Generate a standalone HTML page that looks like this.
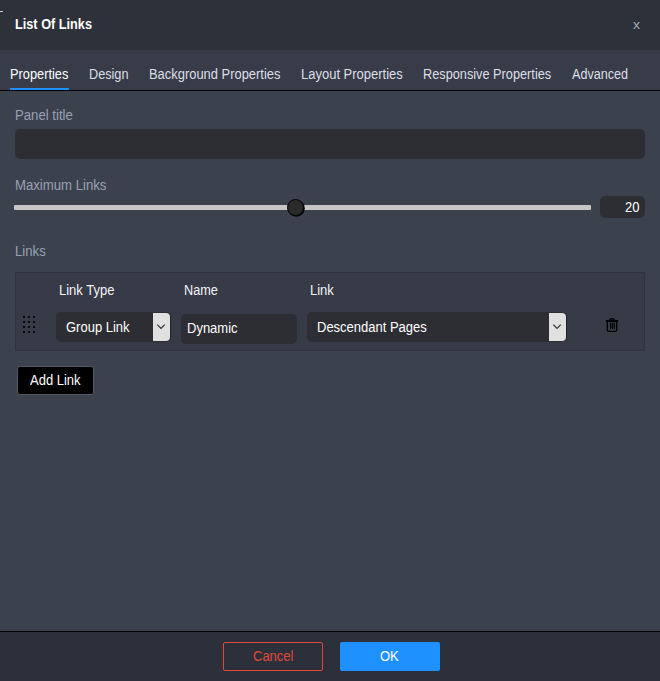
<!DOCTYPE html>
<html><head><meta charset="utf-8">
<style>
*{box-sizing:border-box;margin:0;padding:0}
html,body{width:660px;height:681px;overflow:hidden;background:#3c414e;font-family:"Liberation Sans",sans-serif;font-size:13px;color:#fff}
.abs{position:absolute}
#hdr{left:0;top:0;width:660px;height:50px;background:#2c313a}
#title{left:15px;top:16px;font-weight:bold;font-size:14px;transform-origin:0 0;transform:scaleX(.908);color:#fff;line-height:16px}
#close{left:633px;top:17.4px;font-size:13px;color:#a4a8b2;line-height:16px;transform-origin:0 0;transform:scaleX(1.08)}
#tabs{left:0;top:50px;width:660px;height:41px;background:#383c48;border-bottom:1px solid #000}
.tab{position:absolute;top:66.4px;font-size:14px;transform-origin:0 0;transform:scaleX(.928);line-height:16px;color:#dcdfe6;white-space:nowrap}
#uline{left:10px;top:88px;width:59px;height:2px;background:#1e90ff}
.lbl{position:absolute;font-size:14px;transform-origin:0 0;transform:scaleX(.94);line-height:16px;color:#98a1b3;white-space:nowrap}
.inp{position:absolute;background:#2d2e33;border-radius:5px}
.wl{position:absolute;font-size:14px;transform-origin:0 0;transform:scaleX(.928);line-height:16px;color:#fff;white-space:nowrap}
#foot{left:0;top:630.7px;width:660px;height:51px;background:#2c303a;border-top:1px solid #000}
</style></head><body>
<div class="abs" id="hdr"></div>
<div class="abs" style="left:0;top:11px;width:3px;height:1px;background:#cfcfcf"></div>
<div class="abs" id="title">List Of Links</div>
<div class="abs" id="close">x</div>
<div class="abs" id="tabs"></div>
<div class="tab" style="left:10px;color:#fff;transform:scaleX(.914)">Properties</div>
<div class="tab" style="left:89px;transform:scaleX(.906)">Design</div>
<div class="tab" style="left:149px;transform:scaleX(.923)">Background Properties</div>
<div class="tab" style="left:301px">Layout Properties</div>
<div class="tab" style="left:423px;transform:scaleX(.910)">Responsive Properties</div>
<div class="tab" style="left:572px;transform:scaleX(.9)">Advanced</div>
<div class="abs" id="uline"></div>

<div class="lbl" style="left:15px;top:107.4px">Panel title</div>
<div class="inp" style="left:15px;top:129px;width:630px;height:30px"></div>
<div class="lbl" style="left:15px;top:177.4px">Maximum Links</div>
<div class="abs" style="left:14px;top:205px;width:577px;height:5px;background:#c6c6c6;border-radius:1px"></div>
<div class="abs" style="left:287px;top:199px;width:17px;height:17px;border-radius:50%;background:#2a2a2b;border:1.7px solid #020203;box-shadow:0.8px 0.8px 0.5px #050506"></div>
<div class="inp" style="left:600px;top:196px;width:45px;height:22px"></div>
<div class="wl" style="left:624.7px;top:199.4px">20</div>
<div class="lbl" style="left:15px;top:243.4px">Links</div>

<div class="abs" style="left:15px;top:272px;width:630px;height:79px;background:#363b47;border:1px solid #30343e"></div>
<div class="wl" style="left:59px;top:282.4px;color:#f4f4f6">Link Type</div>
<div class="wl" style="left:184px;top:282.4px;color:#f4f4f6;transform:scaleX(.905)">Name</div>
<div class="wl" style="left:310px;top:282.4px;color:#f4f4f6">Link</div>

<svg class="abs" style="left:23px;top:316px" width="16" height="20" viewBox="0 0 16 20">
<g fill="#0a0a0c">
<rect x="0" y="0" width="2" height="2"/><rect x="5" y="0" width="2" height="2"/><rect x="10" y="0" width="2" height="2"/>
<rect x="0" y="5" width="2" height="2"/><rect x="5" y="5" width="2" height="2"/><rect x="10" y="5" width="2" height="2"/>
<rect x="0" y="10" width="2" height="2"/><rect x="5" y="10" width="2" height="2"/><rect x="10" y="10" width="2" height="2"/>
<rect x="0" y="15" width="2" height="2"/><rect x="5" y="15" width="2" height="2"/><rect x="10" y="15" width="2" height="2"/>
</g></svg>

<div class="inp" style="left:56px;top:312px;width:114.5px;height:30px"></div>
<div class="wl" style="left:66px;top:319.4px">Group Link</div>
<div class="abs" style="left:152.8px;top:313px;width:16.8px;height:28px;background:#e0e0e0;border-radius:0 4px 4px 0;box-shadow:0.9px 0 0 #202125"></div>
<svg class="abs" style="left:155px;top:322.3px" width="12" height="10" viewBox="0 0 12 10"><path d="M2.3 2.7 L6 6.4 L9.7 2.7" fill="none" stroke="#2e2e2e" stroke-width="1.15"/></svg>

<div class="inp" style="left:181px;top:314px;width:116px;height:30px"></div>
<div class="wl" style="left:187px;top:320.4px">Dynamic</div>

<div class="inp" style="left:307px;top:312px;width:259.6px;height:30px"></div>
<div class="wl" style="left:317px;top:319.4px">Descendant Pages</div>
<div class="abs" style="left:548.8px;top:313px;width:16.9px;height:28px;background:#e0e0e0;border-radius:0 4px 4px 0;box-shadow:0.9px 0 0 #202125"></div>
<svg class="abs" style="left:551px;top:322.3px" width="12" height="10" viewBox="0 0 12 10"><path d="M2.35 2.7 L6.05 6.4 L9.75 2.7" fill="none" stroke="#2e2e2e" stroke-width="1.15"/></svg>

<svg class="abs" style="left:595px;top:308px" width="36" height="36" viewBox="0 0 36 36">
<path d="M14.85 12.4 V11.5 Q14.85 10.7 15.65 10.7 H18.35 Q19.15 10.7 19.15 11.5 V12.4" fill="rgba(0,0,0,0.45)" stroke="#020203" stroke-width="1.15"/>
<rect x="10.8" y="11.95" width="12.4" height="2" rx="0.6" fill="#020203"/>
<path d="M12.35 13.5 V22.2 Q12.35 23.35 13.5 23.35 H20.5 Q21.65 23.35 21.65 22.2 V13.5" fill="none" stroke="#020203" stroke-width="1.3"/>
<rect x="15" y="14.7" width="1.2" height="6.3" fill="#020203"/>
<rect x="16.85" y="14.7" width="1.2" height="6.3" fill="#020203"/>
<rect x="18.7" y="14.7" width="1.2" height="6.3" fill="#020203"/>
</svg>

<div class="abs" style="left:17px;top:366px;width:77px;height:29px;background:#000;border:1px solid #535761;border-radius:3px"></div>
<div class="wl" style="left:30px;top:371.9px">Add Link</div>

<div class="abs" id="foot"></div>
<div class="abs" style="left:223px;top:642px;width:100px;height:29px;border:1px solid #e04936;border-radius:2px"></div>
<div class="wl" style="left:253px;top:648.4px;color:#e04936">Cancel</div>
<div class="abs" style="left:340px;top:642px;width:100px;height:29px;background:#1e90ff;border-radius:2px"></div>
<div class="wl" style="left:380px;top:648.4px">OK</div>
</body></html>
